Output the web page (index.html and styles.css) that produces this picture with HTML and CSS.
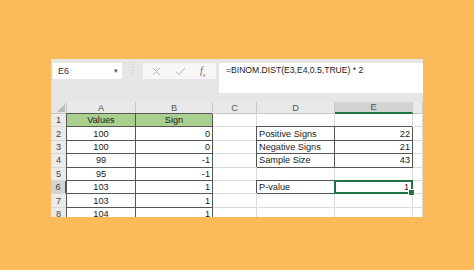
FILE: index.html
```html
<!DOCTYPE html>
<html lang="en">
<head>
    <meta charset="UTF-8">
    <title>BINOM.DIST sign test</title>
    <link rel="stylesheet" href="styles.css">
</head>
<body>
    <div class="window">
        <div class="formula-bar">
            <div class="name-box">
                <span>E6</span>
                <span class="caret">&#9662;</span>
            </div>
            <div class="grip">&#8942;</div>
            <div class="fx-buttons">
                <svg width="9" height="9" viewBox="0 0 9 9"><path d="M1 1L8 8M8 1L1 8" stroke="#b4b4b4" stroke-width="1" fill="none"/></svg>
                <svg width="11" height="9" viewBox="0 0 11 9"><path d="M1 4.5L4 7.5L10 1" stroke="#b4b4b4" stroke-width="1" fill="none"/></svg>
                <span class="fx">f<sub>x</sub></span>
            </div>
            <div class="formula">=BINOM.DIST(E3,E4,0.5,TRUE) * 2</div>
        </div>

        <div class="sheet">
            <!-- column headers -->
            <div class="corner">
                <svg width="8" height="8" viewBox="0 0 8 8"><path d="M8 0L8 8L0 8Z" fill="#bcbcbc"/></svg>
            </div>
            <div class="h">A</div>
            <div class="h">B</div>
            <div class="h">C</div>
            <div class="h">D</div>
            <div class="h sel">E</div>
            <div class="h"></div>

            <div class="rh">1</div>
            <div class="c k g ctr">Values</div>
            <div class="c k g ctr">Sign</div>
            <div class="c"></div>
            <div class="c"></div>
            <div class="c"></div>
            <div class="c"></div>

            <div class="rh">2</div>
            <div class="c k ctr">100</div>
            <div class="c k rt">0</div>
            <div class="c"></div>
            <div class="c k">Positive Signs</div>
            <div class="c k rt">22</div>
            <div class="c"></div>

            <div class="rh">3</div>
            <div class="c k ctr">100</div>
            <div class="c k rt">0</div>
            <div class="c"></div>
            <div class="c k">Negative Signs</div>
            <div class="c k rt">21</div>
            <div class="c"></div>

            <div class="rh">4</div>
            <div class="c k ctr">99</div>
            <div class="c k rt">-1</div>
            <div class="c"></div>
            <div class="c k">Sample Size</div>
            <div class="c k rt">43</div>
            <div class="c"></div>

            <div class="rh">5</div>
            <div class="c k ctr">95</div>
            <div class="c k rt">-1</div>
            <div class="c"></div>
            <div class="c"></div>
            <div class="c"></div>
            <div class="c"></div>

            <div class="rh sel">6</div>
            <div class="c k ctr">103</div>
            <div class="c k rt">1</div>
            <div class="c"></div>
            <div class="c k">P-value</div>
            <div class="c rt active">1</div>
            <div class="c"></div>

            <div class="rh">7</div>
            <div class="c k ctr">103</div>
            <div class="c k rt">1</div>
            <div class="c"></div>
            <div class="c"></div>
            <div class="c"></div>
            <div class="c"></div>

            <div class="rh">8</div>
            <div class="c k ctr">104</div>
            <div class="c k rt">1</div>
            <div class="c"></div>
            <div class="c"></div>
            <div class="c"></div>
            <div class="c"></div>
        </div>
    </div>
</body>
</html>
```

FILE: styles.css
```css
* { box-sizing: border-box; }
body {
    margin: 0;
    background-color: #fcba5b;
    font-family: "Liberation Sans", Arial, sans-serif;
    font-size: 9.2px;
    color: #1a1a1a;
}
.window {
    margin: 59px 0 0 51px;
    width: 372px;
    height: 158px;
    background: #e6e6e6;
    overflow: hidden;
}
.formula-bar {
    display: flex;
    align-items: flex-start;
    height: 43px;
    padding: 4px 0 0 2px;
}
.name-box {
    display: flex;
    align-items: center;
    justify-content: space-between;
    width: 69px;
    height: 16px;
    padding: 0 4px 0 5px;
    background: white;
    font-size: 9px;
    color: #333;
}
.caret { font-size: 7px; color: #555; }
.grip {
    width: 21px;
    height: 16px;
    line-height: 16px;
    text-align: center;
    color: #b8b8b8;
    font-size: 9px;
}
.fx-buttons {
    display: flex;
    align-items: center;
    gap: 14px;
    width: 73px;
    height: 16px;
    padding-left: 9px;
    background: #f7f7f7;
}
.fx {
    font-family: "Liberation Serif", serif;
    font-style: italic;
    font-size: 10px;
    color: #666;
}
.fx sub { font-size: 6px; }
.formula {
    flex: 1;
    height: 30px;
    margin-left: 3px;
    padding: 2px 0 0 7px;
    background: white;
    font-size: 8.6px;
    color: #222;
}
.sheet {
    display: grid;
    grid-template-columns: 16px 69px 77px 44px 78px 78px 10px;
    grid-template-rows: 12px repeat(8, 13.4px);
    background: white;
}
.corner {
    display: flex;
    align-items: flex-end;
    justify-content: flex-end;
    padding: 0 1px 1px 0;
    background: #e6e6e6;
    border-right: 1px solid #c8c8c8;
    border-bottom: 1px solid #c8c8c8;
}
.h {
    display: flex;
    align-items: center;
    justify-content: center;
    background: #e9e9e9;
    color: #555;
    border-right: 1px solid #c8c8c8;
    border-bottom: 1px solid #c8c8c8;
}
.h.sel {
    background: #d3d3d3;
    border-bottom: 2px solid #217346;
}
.rh {
    display: flex;
    align-items: center;
    justify-content: center;
    background: #ebebeb;
    color: #444;
    border-right: 1px solid #c8c8c8;
    border-bottom: 1px solid #d8d8d8;
}
.rh.sel {
    background: #d3d3d3;
    border-right: 2px solid #217346;
}
.c {
    display: flex;
    align-items: center;
    padding: 0 2px;
    white-space: nowrap;
    overflow: hidden;
    border-right: 1px solid #dadada;
    border-bottom: 1px solid #dadada;
}
.k {
    overflow: visible;
    border-right-color: #555;
    border-bottom-color: #555;
    box-shadow: -1px -1px 0 #555;
}
.g { background: #a9d08e; }
.ctr { justify-content: center; }
.rt { justify-content: flex-end; }
.active {
    position: relative;
    overflow: visible;
    border: 2px solid #217346;
    margin: -1px 0 0 -1px;
}
.active::after {
    content: "";
    position: absolute;
    right: -4px;
    bottom: -4px;
    width: 5px;
    height: 5px;
    background: #217346;
    border: 1px solid white;
}
```
